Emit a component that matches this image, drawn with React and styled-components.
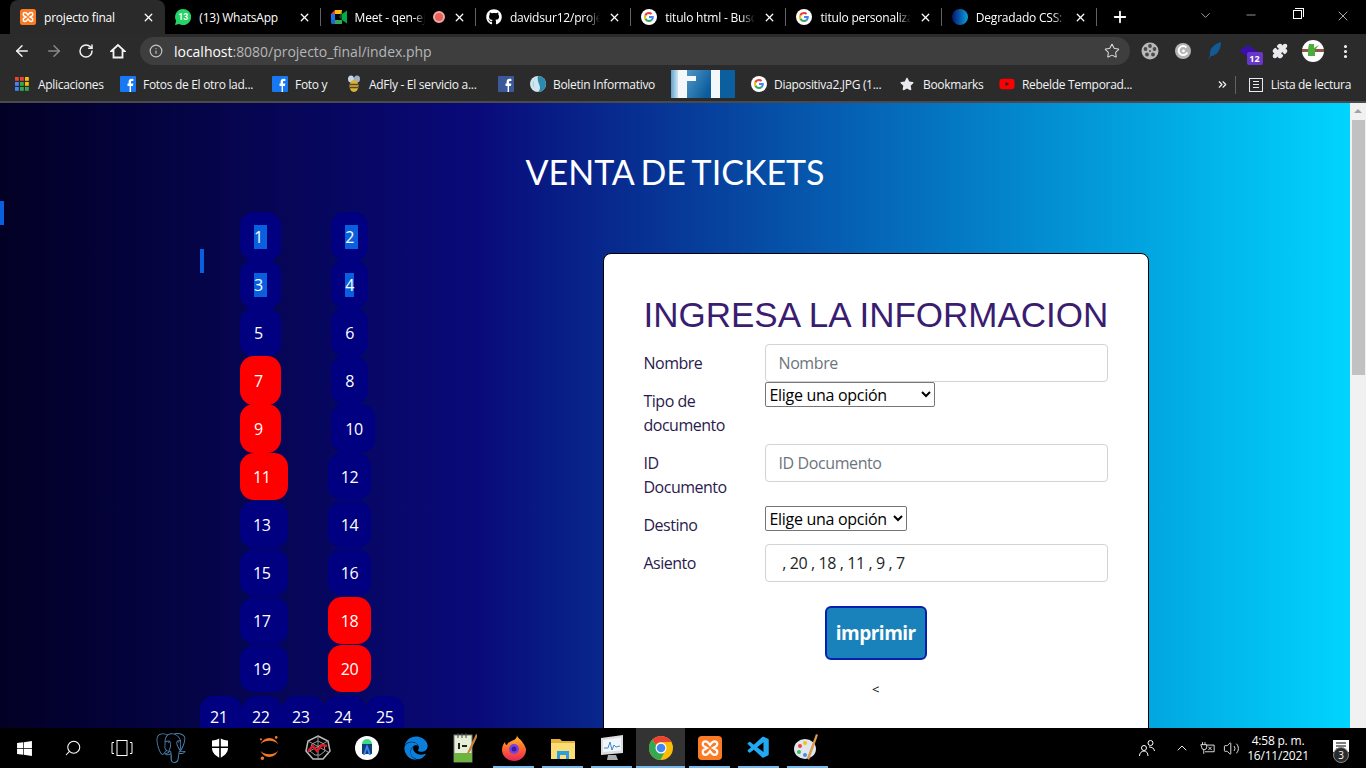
import React from 'react'
import styled, { createGlobalStyle } from 'styled-components'
import {
  ArrowLeft,
  ArrowRight,
  RotateCw,
  Info,
  Star,
  Plus,
  X,
  Minus,
  ChevronDown,
  ChevronUp,
  EllipsisVertical,
  Puzzle,
  Search,
  Volume2,
  ChevronsRight,
} from 'lucide-react'
import { FaGithub, FaWindows, FaEdge, FaStar, FaYoutube } from 'react-icons/fa'
import { SiPostgresql, SiJupyter } from 'react-icons/si'
import { VscVscode } from 'react-icons/vsc'

const UI_FONT = '"Open Sans", "Noto Sans", sans-serif'

const GlobalStyle = createGlobalStyle`
  html, body {
    margin: 0;
    padding: 0;
    background: #000;
    overflow: hidden;
  }
  * { box-sizing: border-box; }
`

/* ---------- little drawings ---------- */

function XamppIcon({ size = 16 }) {
  return (
    <svg width={size} height={size} viewBox='0 0 16 16'>
      <rect width='16' height='16' rx='2.5' fill='#fb7a24' />
      <path
        d='M5 3.5c-2 0-2.5 2.5-.8 3.5L6 8 4.200 9c-1.700 1-1.200 3.500.8 3.500 1.500 0 2-1 3-2.500 1 1.500 1.500 2.500 3 2.500 2 0 2.500-2.500.8-3.500L10 8l1.800-1c1.700-1 1.200-3.500-.8-3.500-1.500 0-2 1-3 2.500-1-1.500-1.500-2.500-3-2.500z'
        fill='none'
        stroke='#fff'
        strokeWidth='1.500'
      />
    </svg>
  )
}

function WhatsappIcon() {
  return (
    <svg width='16' height='16' viewBox='0 0 16 16'>
      <path d='M8 0a8 8 0 0 0-6.900 12L0 16l4.100-1.100A8 8 0 1 0 8 0z' fill='#25d366' />
      <text x='8.200' y='11' fontSize='8.500' fontFamily='Roboto, sans-serif' fontWeight='700' textAnchor='middle' fill='#fff'>
        13
      </text>
    </svg>
  )
}

function MeetIcon() {
  return (
    <svg width='16' height='16' viewBox='0 0 16 16'>
      <path d='M0 5l4-4v4z' fill='#ea4335' />
      <path d='M4 1h7v4H4z' fill='#fbbc04' />
      <path d='M0 5h4v6H0z' fill='#1a73e8' />
      <path d='M0 11h4v4H1.500A1.500 1.500 0 0 1 0 13.500z' fill='#1967d2' />
      <path d='M4 11h7v4H4z' fill='#34a853' />
      <path d='M11 5l5-3.500v13L11 11z' fill='#00ac47' />
      <path d='M11 1v10l-3-3 3-7z' fill='#188038' opacity='.6' />
    </svg>
  )
}

function GoogleIcon() {
  return (
    <svg width='16' height='16' viewBox='0 0 16 16'>
      <circle cx='8' cy='8' r='8' fill='#fff' />
      <path d='M12.800 8.100c0-.4 0-.7-.1-1H8v1.900h2.700c-.1.600-.5 1.200-1 1.500l1.600 1.200c1-.9 1.500-2.200 1.500-3.600z' fill='#4285f4' />
      <path d='M8 13c1.300 0 2.400-.4 3.300-1.200L9.700 10.500c-.4.300-1 .5-1.700.5-1.300 0-2.400-.9-2.800-2L3.500 10.300C4.300 11.900 6 13 8 13z' fill='#34a853' />
      <path d='M5.200 9c-.2-.6-.2-1.300 0-1.900L3.500 5.700c-.7 1.400-.7 3.100 0 4.600z' fill='#fbbc05' />
      <path d='M8 5c.7 0 1.400.3 1.900.7l1.400-1.400C10.400 3.500 9.300 3 8 3 6 3 4.300 4.100 3.500 5.700l1.700 1.400C5.600 5.900 6.700 5 8 5z' fill='#ea4335' />
    </svg>
  )
}

function GradientDot() {
  return (
    <svg width='16' height='16' viewBox='0 0 16 16'>
      <defs>
        <linearGradient id='degradado' x1='0' x2='1' y1='0' y2='0'>
          <stop offset='0' stopColor='#06156e' />
          <stop offset='1' stopColor='#0aa0e0' />
        </linearGradient>
      </defs>
      <circle cx='8' cy='8' r='8' fill='url(#degradado)' />
    </svg>
  )
}

function FacebookIcon({ dark }) {
  return (
    <svg width='16' height='16' viewBox='0 0 16 16'>
      <rect width='16' height='16' rx='1' fill={dark ? '#3b5998' : '#1877f2'} />
      <path d='M11 16v-6h2l.3-2.400H11V6.200c0-.7.2-1.200 1.200-1.200h1.200V2.900c-.3 0-1-.1-1.800-.1-1.800 0-3 1.100-3 3.100v1.700H7.500V10h2.100v6z' fill='#fff' />
    </svg>
  )
}

function AppsIcon() {
  const colors = ['#ea4335', '#ea4335', '#fbbc05', '#4285f4', '#34a853', '#fbbc05', '#4285f4', '#34a853', '#34a853']
  return (
    <svg width='14' height='14' viewBox='0 0 14 14'>
      {colors.map((c, i) => (
        <rect key={i} x={(i % 3) * 5} y={Math.floor(i / 3) * 5} width='3.800' height='3.800' fill={c} />
      ))}
    </svg>
  )
}

function BeeIcon() {
  return (
    <svg width='16' height='18' viewBox='0 0 16 18'>
      <ellipse cx='5' cy='4' rx='3' ry='3.500' fill='#c9d6e2' />
      <ellipse cx='11' cy='4' rx='3' ry='3.500' fill='#9fb2c4' />
      <ellipse cx='8' cy='11' rx='4.500' ry='6' fill='#d9b23c' />
      <path d='M4 9.500h8M3.800 12.500h8.400' stroke='#5b4a1c' strokeWidth='1.500' />
    </svg>
  )
}

function GlobeIcon() {
  return (
    <svg width='16' height='16' viewBox='0 0 16 16'>
      <circle cx='8' cy='8' r='8' fill='#cfe6ee' />
      <path d='M8 0a8 8 0 0 1 0 16c3-3 2-5 1-8s-2-5-1-8z' fill='#2d89ad' />
      <path d='M6 2C3 4 2 8 5 13 3 10 1 6 6 2z' fill='#2d89ad' />
    </svg>
  )
}

function ThumbImage() {
  return (
    <svg width='64' height='28' viewBox='0 0 64 28'>
      <defs>
        <linearGradient id='thumbLeft' x1='0' x2='1' y1='0' y2='0'>
          <stop offset='0' stopColor='#5fa3cf' />
          <stop offset='1' stopColor='#cfe5f2' />
        </linearGradient>
        <linearGradient id='thumbMid' x1='0' x2='1' y1='0' y2='.6'>
          <stop offset='0' stopColor='#4f97c6' />
          <stop offset='1' stopColor='#0b5c9c' />
        </linearGradient>
      </defs>
      <rect width='7' height='28' fill='url(#thumbLeft)' />
      <rect x='7' width='9' height='28' fill='#f4f8fb' />
      <rect x='16' width='24' height='28' fill='url(#thumbMid)' />
      <rect x='16' y='6' width='9' height='5' fill='#f4f8fb' />
      <rect x='40' width='9' height='28' fill='#f4f8fb' />
      <rect x='49' width='15' height='28' fill='#0b5f9f' />
    </svg>
  )
}

function HomeIcon() {
  return (
    <svg width='16' height='16' viewBox='0 0 16 16' fill='none' stroke='#f1f3f4' strokeWidth='1.800' strokeLinejoin='miter'>
      <path d='M1.500 8L8 2l6.500 6h-2v6.500h-9V8z' />
    </svg>
  )
}

function ReelIcon() {
  return (
    <svg width='18' height='18' viewBox='0 0 18 18'>
      <circle cx='9' cy='9' r='8.500' fill='#b9b9b9' />
      {[[9, 4], [13.500, 7], [12, 12.500], [6, 12.500], [4.500, 7]].map(([cx, cy], i) => (
        <circle key={i} cx={cx} cy={cy} r='1.900' fill='#4a4a4a' />
      ))}
      <circle cx='9' cy='9' r='1' fill='#4a4a4a' />
    </svg>
  )
}

function GreyCIcon() {
  return (
    <svg width='16' height='16' viewBox='0 0 16 16'>
      <circle cx='8' cy='8' r='8' fill='#b4b4b4' />
      <path d='M11.500 4.500a4.500 4.500 0 1 0 .8 4.800' fill='none' stroke='#fff' strokeWidth='2' />
      <circle cx='8.500' cy='8' r='1.400' fill='#fff' />
    </svg>
  )
}

function FeatherIcon() {
  return (
    <svg width='14' height='18' viewBox='0 0 14 18'>
      <path d='M13 0C6 2 1 7 2 13L0 18l3-4c6 0 10-7 10-14z' fill='#135a94' />
    </svg>
  )
}

function DiamondIcon() {
  return (
    <svg width='18' height='12' viewBox='0 0 18 12'>
      <path d='M9 0l9 6-9 6-9-6z' fill='#3a10a8' />
    </svg>
  )
}

function AvatarIcon() {
  return (
    <svg width='22' height='22' viewBox='0 0 22 22'>
      <circle cx='11' cy='11' r='11' fill='#fff' />
      <path d='M0 9h22v3H0z' fill='#7a3a28' opacity='.85' />
      <path d='M7 4h5v4l5-3-4 5v6H8v4-4H6V9z' fill='#4cae3a' />
    </svg>
  )
}

function TaskViewIcon() {
  return (
    <svg width='22' height='18' viewBox='0 0 22 18' fill='none' stroke='#fff' strokeWidth='1'>
      <rect x='6' y='1.500' width='10' height='15' />
      <path d='M3 3.500H1v11h2M19 3.500h2v11h-2' />
    </svg>
  )
}

function ShieldIcon() {
  return (
    <svg width='16' height='20' viewBox='0 0 16 20'>
      <path d='M8 0c2 1.500 5 2.500 8 2.500V10c0 5-4 8-8 10-4-2-8-5-8-10V2.500C3 2.500 6 1.500 8 0z' fill='#fff' />
      <path d='M7.200 0h1.600v20H7.200zM0 8.500h16V10H0z' fill='#000' />
    </svg>
  )
}

function SpiderIcon() {
  return (
    <svg width='26' height='26' viewBox='0 0 26 26' fill='none'>
      <path d='M13 1l10 5 2 10-7 8H8l-7-8 2-10z' stroke='#bbb' strokeWidth='1.500' />
      <path d='M13 1v24M3 6l20 11M23 6L3 17M7 9l6-3 6 3 1 7-5 4h-5l-5-4z' stroke='#999' strokeWidth='1' />
      <path d='M3 16l5-5 4 5 5-6 5 1' stroke='#e01b24' strokeWidth='2.400' />
    </svg>
  )
}

function StudioIcon() {
  return (
    <svg width='24' height='24' viewBox='0 0 24 24'>
      <circle cx='12' cy='12' r='12' fill='#fff' />
      <path d='M7 8a5 5 0 0 1 10 0z' fill='#3ddc84' />
      <path d='M7 8h10v10H7z' fill='#0f3f7a' />
      <path d='M12 8l-4 11h2l2-6 2 6h2z' fill='#4285f4' />
    </svg>
  )
}

function NotepadIcon() {
  return (
    <svg width='24' height='30' viewBox='0 0 24 30'>
      <rect x='1' y='2' width='18' height='27' fill='#e6eed6' stroke='#777' />
      <path d='M1 20h18v9H1z' fill='#6cb33f' />
      <path d='M5 0v5M9 0v5M13 0v5' stroke='#444' />
      <path d='M6 10v6M9 13h5' stroke='#222' strokeWidth='2' />
      <path d='M23 1l-8 17-2 4 4-3 8-17z' fill='#c9843a' />
    </svg>
  )
}

function FirefoxIcon() {
  return (
    <svg width='24' height='26' viewBox='0 0 24 26'>
      <defs>
        <linearGradient id='zorro' x1='0' x2='0' y1='0' y2='1'>
          <stop offset='0' stopColor='#ffc52e' />
          <stop offset='.5' stopColor='#ff6a2a' />
          <stop offset='1' stopColor='#e8245c' />
        </linearGradient>
      </defs>
      <path d='M15 0c0 3 4 4 6 8 2 3 3 5 3 7a12 11 0 1 1-24 0c0-3 1-6 3-8 0 2 1 3 2 3 1-3 5-4 7-5 2-1 3-3 3-5z' fill='url(#zorro)' />
      <circle cx='12' cy='14' r='5' fill='#7542e5' />
      <circle cx='12' cy='14' r='2.500' fill='#3b1a9b' />
    </svg>
  )
}

function FolderIcon() {
  return (
    <svg width='24' height='22' viewBox='0 0 24 22'>
      <path d='M0 2h9l2 2h13v4H0z' fill='#e2b33a' />
      <path d='M0 6h24v16H0z' fill='#fbdc75' />
      <path d='M6 14h12v8h-3v-4H9v4H6z' fill='#2a9fe0' />
    </svg>
  )
}

function MonitorIcon() {
  return (
    <svg width='24' height='26' viewBox='0 0 24 26'>
      <path d='M1 3l22-3v18L1 20z' fill='#d9dde0' />
      <path d='M3 5l18-2.500v13L3 17z' fill='#f2f6f8' />
      <path d='M4 13l4 0 2-6 2 8 2-5 2 2 4-1' stroke='#3d89c9' fill='none' />
      <path d='M8 20h8l2 5H7z' fill='#a9adb0' />
    </svg>
  )
}

function ChromeIcon() {
  return (
    <svg width='24' height='24' viewBox='0 0 24 24'>
      <circle cx='12' cy='12' r='12' fill='#fbbc05' />
      <path d='M12 0a12 12 0 0 1 10.400 6H12a6 6 0 0 0-5.200 3L3.600 3.500A12 12 0 0 1 12 0z' fill='#ea4335' />
      <path d='M3.600 3.500l5.200 9A6 6 0 0 0 15 17.200l-3.600 6.800A12 12 0 0 1 3.600 3.500z' fill='#34a853' />
      <circle cx='12' cy='12' r='5.500' fill='#fff' />
      <circle cx='12' cy='12' r='4.300' fill='#4285f4' />
    </svg>
  )
}

function PaletteIcon() {
  return (
    <svg width='26' height='28' viewBox='0 0 26 28'>
      <ellipse cx='11' cy='15' rx='11' ry='10' fill='#dfe6ee' />
      <circle cx='6' cy='12' r='2' fill='#e8453c' />
      <circle cx='11' cy='9' r='2' fill='#f4c20d' />
      <circle cx='5' cy='18' r='2' fill='#3cba54' />
      <circle cx='11' cy='21' r='2' fill='#4885ed' />
      <path d='M24 1l-2-1-9 24 2 2z' fill='#d99a4e' />
    </svg>
  )
}

function PeopleIcon() {
  return (
    <svg width='18' height='18' viewBox='0 0 18 18' fill='none' stroke='#fff' strokeWidth='1'>
      <circle cx='6' cy='9' r='2.500' />
      <path d='M1.500 17c0-3 2-5 4.500-5s4 2 4 5' />
      <circle cx='12.500' cy='4' r='2.500' />
      <path d='M11 8c3 0 5 1 5.500 4' />
    </svg>
  )
}

function BatteryIcon() {
  return (
    <svg width='15' height='14' viewBox='0 0 18 14' fill='none' stroke='#fff' strokeWidth='1'>
      <path d='M3 0v3M6 0v3M1 3h7v3a3 3 0 0 1-6 0zM4.500 9v5' />
      <path d='M8 3.500h9v8H6' />
      <path d='M10 5.500l4 4M14 5.500l-4 4' />
    </svg>
  )
}

function NotifyIcon() {
  return (
    <svg width='16' height='16' viewBox='0 0 16 16'>
      <path d='M0 0h16v12H8l-3 4v-4H0z' fill='#fff' />
      <path d='M3 3h10M3 6h10M3 9h6' stroke='#000' />
    </svg>
  )
}

/* ---------- browser chrome ---------- */

const Screen = styled.div`
  width: 1366px;
  height: 768px;
  display: flex;
  flex-direction: column;
  overflow: hidden;
  font-family: ${UI_FONT};
`

const TabStrip = styled.div`
  height: 34px;
  background: #000;
  display: flex;
  align-items: stretch;
  padding-left: 10px;
  color: #fff;
`

const Tab = styled.div`
  width: 155.3px;
  display: flex;
  align-items: center;
  gap: 8px;
  padding: 0 10px;
  position: relative;
  border-radius: 8px 8px 0 0;
  background: ${(p) => (p.$active ? '#2a2a2a' : 'transparent')};
  &::after {
    content: '';
    display: ${(p) => (p.$sep ? 'block' : 'none')};
    position: absolute;
    right: 0;
    top: 8px;
    bottom: 8px;
    width: 1px;
    background: #5f6368;
  }
`

const TabTitle = styled.span`
  flex: 1;
  min-width: 0;
  font-size: 12px;
  letter-spacing: -0.2px;
  white-space: nowrap;
  overflow: hidden;
  mask-image: ${(p) => (p.$fade ? 'linear-gradient(90deg, #000 85%, transparent)' : 'none')};
`

const RecDot = styled.span`
  width: 12px;
  height: 12px;
  border-radius: 50%;
  border: 2px solid #f2a9a3;
  background: #e8615a;
  flex: none;
`

const NewTab = styled.div`
  margin-left: 10px;
  width: 26px;
  display: flex;
  align-items: center;
  justify-content: center;
`

const WindowControls = styled.div`
  margin-left: auto;
  display: flex;
  align-items: flex-start;
  padding-top: 8px;
`

const WinButton = styled.div`
  width: ${(p) => p.$w}px;
  display: flex;
  justify-content: center;
`

const RestoreIcon = styled.span`
  width: 9px;
  height: 9px;
  margin-top: 2px;
  border: 1px solid #fff;
  position: relative;
  &::before {
    content: '';
    position: absolute;
    left: 1px;
    top: -3px;
    width: 8px;
    height: 8px;
    border-top: 1px solid #fff;
    border-right: 1px solid #fff;
  }
`

const Toolbar = styled.div`
  height: 34px;
  background: #2b2b2b;
  display: flex;
  align-items: center;
  padding-left: 6px;
  color: #f1f3f4;
`

const NavButton = styled.div`
  width: 32px;
  display: flex;
  justify-content: center;
  color: ${(p) => (p.$off ? '#8a8a8a' : '#f1f3f4')};
`

const Omnibox = styled.div`
  width: 990px;
  height: 28px;
  margin-left: 6px;
  border-radius: 14px;
  background: #3e3e3e;
  display: flex;
  align-items: center;
  padding: 0 10px 0 9px;
  font-size: 14px;
  color: #fff;
`

const Url = styled.div`
  margin-left: 11px;
  flex: 1;
  letter-spacing: -0.02px;
  span {
    color: #b5b7b9;
  }
`

const Extensions = styled.div`
  display: flex;
  align-items: center;
  margin-left: 4px;
`

const ExtSlot = styled.div`
  width: 32.500px;
  height: 28px;
  display: flex;
  align-items: center;
  justify-content: center;
  position: relative;
`

const ExtBadge = styled.span`
  position: absolute;
  left: 15px;
  top: 15px;
  width: 16px;
  height: 13px;
  border-radius: 2px;
  background: #6a35c9;
  color: #fff;
  font-size: 9px;
  font-weight: 700;
  line-height: 13px;
  text-align: center;
`

const BookmarkBar = styled.div`
  height: 33px;
  background: #2b2b2b;
  border-bottom: 2px solid #4a4a4a;
  box-sizing: content-box;
  display: flex;
  align-items: center;
  padding-left: 15px;
  color: #f1f3f4;
`

const Bookmark = styled.div`
  display: flex;
  align-items: center;
  width: ${(p) => p.$w}px;
  flex: none;
  font-size: 12px;
  line-height: 15px;
  padding-bottom: 1px;
  letter-spacing: -0.3px;
  white-space: nowrap;
`

const BookmarkIcon = styled.span`
  width: ${(p) => p.$w || 23}px;
  flex: none;
  display: flex;
  align-items: center;
`

const BookmarkEnd = styled.div`
  margin-left: auto;
  display: flex;
  align-items: center;
  font-size: 12px;
  letter-spacing: -0.3px;
  white-space: nowrap;
  padding-right: 15px;
`

const BarDivider = styled.span`
  width: 1px;
  height: 18px;
  background: #5f6368;
  margin: 0 13px 0 6px;
`

const ListIcon = styled.span`
  width: 14px;
  height: 14px;
  margin-right: 8px;
  border: 1.500px solid #e8eaed;
  background:
    linear-gradient(#e8eaed, #e8eaed) 3px 2px / 6px 1px no-repeat,
    linear-gradient(#e8eaed, #e8eaed) 3px 5px / 6px 1px no-repeat,
    linear-gradient(#e8eaed, #e8eaed) 3px 8px / 6px 1px no-repeat;
`

/* ---------- the page ---------- */

const Viewport = styled.div`
  flex: 1;
  min-height: 0;
  display: flex;
`

const Page = styled.div`
  flex: 1;
  min-width: 0;
  overflow: hidden;
  position: relative;
  background: linear-gradient(90deg, #020024 0%, #090979 35%, #00d4ff 100%);
`

const Title = styled.h1`
  margin: 0;
  height: 109px;
  padding-top: 48px;
  text-align: center;
  color: #fff;
  font-family: Lato, sans-serif;
  font-weight: 400;
  font-size: 34px;
  line-height: 42px;
  word-spacing: -2px;
`

const Content = styled.div`
  display: flex;
  align-items: flex-start;
`

const SeatMap = styled.div`
  width: 602.500px;
  flex: none;
  padding-left: 200px;
  display: flex;
  flex-direction: column;
  color: #fff;
  font-size: 16px;
`

const SeatBlock = styled.div`
  display: flex;
  flex-direction: column;
  padding-left: 40px;
  margin-bottom: ${(p) => p.$after}px;
`

const SeatRow = styled.div`
  display: flex;
  height: ${(p) => p.$h || 48}px;
  gap: ${(p) => p.$gap || 0}px;
`

const Seat = styled.div`
  width: ${(p) => p.$w}px;
  height: ${(p) => p.$h}px;
  flex: none;
  display: flex;
  align-items: center;
  padding-left: ${(p) => p.$pad || 14}px;
  border-radius: 14px;
  background: ${(p) => (p.$taken ? '#ff0000' : '#000080')};
  line-height: 24px;
  letter-spacing: -0.4px;
`

const SeatNumber = styled.span`
  background: ${(p) => (p.$picked ? '#0a5fde' : 'transparent')};
  padding-right: ${(p) => (p.$trail ? '4px' : '0')};
`

const StrayCaret = styled.span`
  position: absolute;
  left: ${(p) => p.$x}px;
  top: ${(p) => p.$y}px;
  width: 4px;
  height: 24px;
  background: #0a5fde;
`

const Card = styled.section`
  width: 546.500px;
  height: 560px;
  margin-top: 41px;
  flex: none;
  background: #fff;
  border: 1px solid #000;
  border-radius: 8px;
  padding: 40px 40px 0;
  color: #2a1a4e;
  font-size: 16px;
  line-height: 24px;
`

const CardTitle = styled.h2`
  margin: 0 0 8px;
  font-family: "Liberation Sans", Arial, sans-serif;
  font-weight: 400;
  font-size: 35px;
  line-height: 42px;
  color: #3a1c71;
  white-space: nowrap;
`

const FormRow = styled.div`
  display: grid;
  grid-template-columns: 121px 343px;
  align-items: start;
`

const Label = styled.label`
  display: block;
  padding: 7px 24px 7px 0;
  letter-spacing: -0.5px;
`

const TextInput = styled.input`
  display: block;
  width: 100%;
  height: 38px;
  padding: 0 13px;
  border: 1px solid #ced4da;
  border-radius: 4px;
  background: #fff;
  color: #212529;
  font: inherit;
  letter-spacing: -0.4px;
  &::placeholder {
    color: #6c757d;
    opacity: 1;
  }
`

const Select = styled.select`
  display: block;
  width: ${(p) => p.$w}px;
  height: 25px;
  background: #fff;
  color: #000;
  border: 1px solid #767676;
  border-radius: 2px;
  font-family: ${UI_FONT};
  font-size: 16px;
  letter-spacing: -0.3px;
  padding: 0;
`

const Actions = styled.div`
  display: flex;
  flex-direction: column;
  align-items: center;
  margin-top: 24px;
`

const PrintButton = styled.button`
  width: 102px;
  height: 54px;
  padding: 0;
  background: #1a82bb;
  border: 2px solid #0520ae;
  border-radius: 6px;
  color: #fff;
  font-family: ${UI_FONT};
  font-size: 19px;
  font-weight: 700;
  letter-spacing: -0.5px;
`

const BackMark = styled.span`
  margin-top: 19px;
  font-size: 13px;
  line-height: 20px;
  color: #000;
`

const Scrollbar = styled.div`
  width: 16px;
  flex: none;
  background: #f1f1f1;
  display: flex;
  flex-direction: column;
  align-items: center;
`

const ScrollArrow = styled.span`
  margin-top: 6px;
  width: 0;
  height: 0;
  border-left: 4px solid transparent;
  border-right: 4px solid transparent;
  border-bottom: 4px solid #a3a3a3;
`

const ScrollThumb = styled.div`
  margin-top: 7px;
  width: 13px;
  height: 255px;
  background: #c1c1c1;
`

/* ---------- taskbar ---------- */

const Taskbar = styled.div`
  height: 40px;
  background: #000;
  display: flex;
  align-items: stretch;
  color: #fff;
`

const TaskItem = styled.div`
  width: 48.950px;
  flex: none;
  display: flex;
  align-items: center;
  justify-content: center;
  position: relative;
  background: ${(p) => (p.$active ? '#333' : 'transparent')};
  &::after {
    content: '';
    display: ${(p) => (p.$open ? 'block' : 'none')};
    position: absolute;
    bottom: 0;
    left: ${(p) => (p.$active ? '0' : '4px')};
    right: ${(p) => (p.$active ? '0' : '4px')};
    height: 2px;
    background: #76b9ed;
  }
`

const Tray = styled.div`
  margin-left: auto;
  display: flex;
  align-items: center;
`

const TraySlot = styled.div`
  width: ${(p) => p.$w}px;
  display: flex;
  justify-content: center;
  position: relative;
`

const Clock = styled.div`
  width: 76px;
  text-align: center;
  font-size: 12px;
  letter-spacing: -0.2px;
  line-height: 15px;
`

const NotifyBadge = styled.span`
  position: absolute;
  left: 17px;
  top: 7px;
  width: 16px;
  height: 16px;
  border-radius: 50%;
  border: 1px solid #888;
  background: #2b2b2b;
  font-size: 10px;
  line-height: 14px;
  text-align: center;
`

/* ---------- data ---------- */

const tabs = [
  { icon: <XamppIcon />, title: 'projecto final', active: true },
  { icon: <WhatsappIcon />, title: '(13) WhatsApp', sep: true },
  { icon: <MeetIcon />, title: 'Meet - qen-ejcz-wgk', rec: true, sep: true, fade: true },
  { icon: <FaGithub size={16} />, title: 'davidsur12/projecto', sep: true, fade: true },
  { icon: <GoogleIcon />, title: 'titulo html - Buscar con Google', sep: true, fade: true },
  { icon: <GoogleIcon />, title: 'titulo personalizado - Buscar', sep: true, fade: true },
  { icon: <GradientDot />, title: 'Degradado CSS: generador', sep: true, fade: true },
]

const bookmarks = [
  { icon: <AppsIcon />, label: 'Aplicaciones', w: 105 },
  { icon: <FacebookIcon />, label: 'Fotos de El otro lad...', w: 152 },
  { icon: <FacebookIcon />, label: 'Foto y', w: 74 },
  { icon: <BeeIcon />, label: 'AdFly - El servicio a...', w: 152 },
  { icon: <FacebookIcon dark />, w: 32 },
  { icon: <GlobeIcon />, label: 'Boletin Informativo', w: 141 },
  { icon: <ThumbImage />, iconW: 64, w: 80 },
  { icon: <GoogleIcon />, label: 'Diapositiva2.JPG (1...', w: 149 },
  { icon: <FaStar size={14} color='#e8eaed' />, label: 'Bookmarks', w: 99 },
  { icon: <FaYoutube size={16} color='#f00' />, label: 'Rebelde Temporad...', w: 140 },
]

const upperRows = [
  { a: { n: 1, w: 41.3, picked: true, trail: true }, b: { n: 2, w: 36.4, picked: true, trail: true } },
  { a: { n: 3, w: 41.3, picked: true, trail: true }, b: { n: 4, w: 36.4, picked: true } },
  { a: { n: 5, w: 41.3 }, b: { n: 6, w: 36.4 } },
  { a: { n: 7, w: 41.3, taken: true }, b: { n: 8, w: 36.4 } },
  { a: { n: 9, w: 41.3, taken: true }, b: { n: 10, w: 44 } },
]

const lowerRows = [
  { a: { n: 11, taken: true }, b: { n: 12 } },
  { a: { n: 13 }, b: { n: 14 } },
  { a: { n: 15 }, b: { n: 16 } },
  { a: { n: 17 }, b: { n: 18, taken: true } },
  { a: { n: 19 }, b: { n: 20, taken: true } },
]

const backRow = [
  { n: 21, w: 42 },
  { n: 22, w: 40 },
  { n: 23, w: 42 },
  { n: 24, w: 42 },
  { n: 25, w: 38 },
]

const taskIcons = [
  { icon: <FaWindows size={17} /> },
  { icon: <Search size={18} strokeWidth={1.4} style={{ transform: 'scaleX(-1)' }} /> },
  { icon: <TaskViewIcon /> },
  { icon: <SiPostgresql size={30} color='#4a7fae' /> },
  { icon: <ShieldIcon /> },
  { icon: <SiJupyter size={24} color='#f37726' /> },
  { icon: <SpiderIcon /> },
  { icon: <StudioIcon /> },
  { icon: <FaEdge size={24} color='#0a7fdc' /> },
  { icon: <NotepadIcon /> },
  { icon: <FirefoxIcon />, open: true },
  { icon: <FolderIcon />, open: true },
  { icon: <MonitorIcon />, open: true },
  { icon: <ChromeIcon />, open: true, active: true },
  { icon: <XamppIcon size={24} />, open: true },
  { icon: <VscVscode size={26} color='#23a9f2' />, open: true },
  { icon: <PaletteIcon />, open: true },
]

function SeatCell({ seat, h, pad }) {
  return (
    <Seat $w={seat.w} $h={h} $taken={seat.taken} $pad={pad}>
      <SeatNumber $picked={seat.picked} $trail={seat.trail}>
        {seat.n}
      </SeatNumber>
    </Seat>
  )
}

function App() {
  return (
    <Screen>
      <GlobalStyle />
      <TabStrip>
        {tabs.map((t) => (
          <Tab key={t.title} $active={t.active} $sep={t.sep}>
            {t.icon}
            <TabTitle $fade={t.fade}>{t.title}</TabTitle>
            {t.rec && <RecDot />}
            <X size={13} strokeWidth={2.4} />
          </Tab>
        ))}
        <NewTab>
          <Plus size={18} strokeWidth={2.4} />
        </NewTab>
        <WindowControls>
          <WinButton $w={46}>
            <ChevronDown size={15} strokeWidth={1} />
          </WinButton>
          <WinButton $w={46}>
            <Minus size={14} strokeWidth={1} />
          </WinButton>
          <WinButton $w={46}>
            <RestoreIcon />
          </WinButton>
          <WinButton $w={46}>
            <X size={16} strokeWidth={1} />
          </WinButton>
        </WindowControls>
      </TabStrip>

      <Toolbar>
        <NavButton>
          <ArrowLeft size={18} strokeWidth={2} />
        </NavButton>
        <NavButton $off>
          <ArrowRight size={18} strokeWidth={2} />
        </NavButton>
        <NavButton>
          <RotateCw size={16} strokeWidth={2.2} />
        </NavButton>
        <NavButton>
          <HomeIcon />
        </NavButton>
        <Omnibox>
          <Info size={14} color='#c4c7c9' />
          <Url>
            localhost<span>:8080/projecto_final/index.php</span>
          </Url>
          <Star size={16} color='#d5d7d9' strokeWidth={1.6} />
        </Omnibox>
        <Extensions>
          <ExtSlot>
            <ReelIcon />
          </ExtSlot>
          <ExtSlot>
            <GreyCIcon />
          </ExtSlot>
          <ExtSlot>
            <FeatherIcon />
          </ExtSlot>
          <ExtSlot>
            <DiamondIcon />
            <ExtBadge>12</ExtBadge>
          </ExtSlot>
          <ExtSlot>
            <Puzzle size={16} fill='#e8eaed' color='#e8eaed' />
          </ExtSlot>
          <ExtSlot>
            <AvatarIcon />
          </ExtSlot>
          <ExtSlot>
            <EllipsisVertical size={17} strokeWidth={2.4} />
          </ExtSlot>
        </Extensions>
      </Toolbar>

      <BookmarkBar>
        {bookmarks.map((b, i) => (
          <Bookmark key={i} $w={b.w}>
            <BookmarkIcon $w={b.iconW}>{b.icon}</BookmarkIcon>
            {b.label}
          </Bookmark>
        ))}
        <BookmarkEnd>
          <ChevronsRight size={13} strokeWidth={2.2} />
          <BarDivider />
          <ListIcon />
          Lista de lectura
        </BookmarkEnd>
      </BookmarkBar>

      <Viewport>
        <Page>
          <StrayCaret $x={0} $y={98} />
          <StrayCaret $x={200} $y={146} />
          <Title>VENTA DE TICKETS</Title>
          <Content>
            <SeatMap>
              <SeatBlock $after={1}>
                {upperRows.map((r) => (
                  <SeatRow key={r.a.n} $gap={50}>
                    <SeatCell seat={r.a} h={49} />
                    <SeatCell seat={r.b} h={49} />
                  </SeatRow>
                ))}
              </SeatBlock>
              <SeatBlock $after={3}>
                {lowerRows.map((r) => (
                  <SeatRow key={r.a.n} $gap={39.7}>
                    <SeatCell seat={{ ...r.a, w: 48 }} h={47} pad={13} />
                    <SeatCell seat={{ ...r.b, w: 43.3 }} h={47} pad={13} />
                  </SeatRow>
                ))}
              </SeatBlock>
              <SeatRow $h={42}>
                {backRow.map((s) => (
                  <Seat key={s.n} $w={s.w} $h={42} $pad={10}>
                    {s.n}
                  </Seat>
                ))}
              </SeatRow>
            </SeatMap>

            <Card>
              <CardTitle>INGRESA LA INFORMACION</CardTitle>
              <FormRow>
                <Label>Nombre</Label>
                <TextInput placeholder='Nombre' />
              </FormRow>
              <FormRow>
                <Label>Tipo de documento</Label>
                <Select $w={170}>
                  <option>Elige una opción</option>
                </Select>
              </FormRow>
              <FormRow>
                <Label>ID Documento</Label>
                <TextInput placeholder='ID Documento' />
              </FormRow>
              <FormRow>
                <Label>Destino</Label>
                <Select $w={142}>
                  <option>Elige una opción</option>
                </Select>
              </FormRow>
              <FormRow>
                <Label>Asiento</Label>
                <TextInput readOnly value=' , 20 , 18 , 11 , 9 , 7' />
              </FormRow>
              <Actions>
                <PrintButton>imprimir</PrintButton>
                <BackMark>&lt;</BackMark>
              </Actions>
            </Card>
          </Content>
        </Page>
        <Scrollbar>
          <ScrollArrow />
          <ScrollThumb />
        </Scrollbar>
      </Viewport>

      <Taskbar>
        {taskIcons.map((t, i) => (
          <TaskItem key={i} $open={t.open} $active={t.active}>
            {t.icon}
          </TaskItem>
        ))}
        <Tray>
          <TraySlot $w={50}>
            <PeopleIcon />
          </TraySlot>
          <TraySlot $w={20}>
            <ChevronUp size={16} strokeWidth={1.4} />
          </TraySlot>
          <TraySlot $w={30}>
            <BatteryIcon />
          </TraySlot>
          <TraySlot $w={18}>
            <Volume2 size={17} strokeWidth={1.2} />
          </TraySlot>
          <Clock>
            4:58 p. m.
            <br />
            16/11/2021
          </Clock>
          <TraySlot $w={50}>
            <NotifyIcon />
            <NotifyBadge>3</NotifyBadge>
          </TraySlot>
        </Tray>
      </Taskbar>
    </Screen>
  )
}

export default App
